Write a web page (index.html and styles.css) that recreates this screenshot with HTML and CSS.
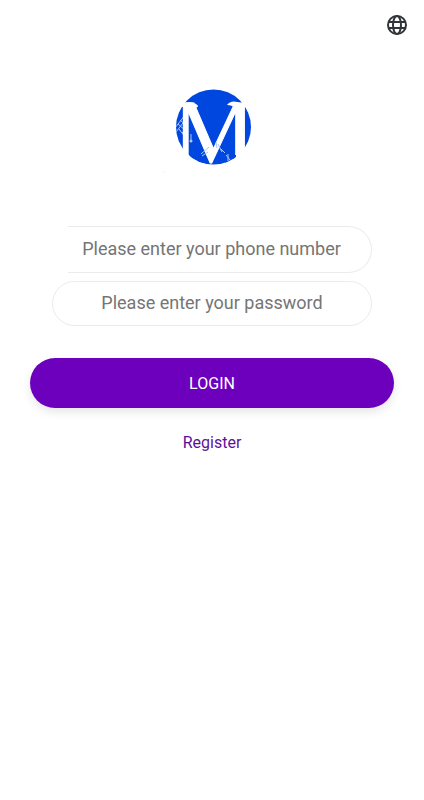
FILE: index.html
```html
<!DOCTYPE html>
<html lang="en">
<head>
  <meta charset="utf-8">
  <meta name="viewport" content="width=device-width, initial-scale=1">
  <title>Login</title>
  <link rel="stylesheet" href="styles.css">
</head>
<body>
  <header class="topbar">
    <button class="language" type="button" aria-label="Language">
      <svg viewBox="0 0 24 24" width="24" height="24" fill="none" stroke="currentColor" stroke-width="2" aria-hidden="true">
        <circle cx="12" cy="12" r="9"/>
        <ellipse cx="12" cy="12" rx="4" ry="9"/>
        <path d="M3.5 9h17M3.5 15h17"/>
      </svg>
    </button>
  </header>
  <main class="login">
    <svg class="logo" viewBox="0 0 100 100" width="100" height="100" role="img" aria-label="M">
      <defs>
        <clipPath id="disc"><circle cx="53.5" cy="47" r="37.5"/></clipPath>
      </defs>
      <circle cx="53.5" cy="47" r="37.5" fill="#0047df"/>
      <g clip-path="url(#disc)" fill="none" stroke="#a9c6f7" stroke-width="1">
        <path d="M15 48l10-13M16 52l10-13M18 44l9 8M20 40l8 7M22 52l6 5M19 49l6 8"/>
      </g>
      <text class="logo-letter" x="54" y="83" text-anchor="middle">M</text>
      <g clip-path="url(#disc)">
        <path d="M30 75h13v12H30zM65 75h11v12H65z" fill="#0047df"/>
        <g fill="none" stroke="#a9c6f7" stroke-width="1">
          <path d="M31 54v8M41 74l8-7M42 76l6-4M56 62l1 6M58 64l4 8M61 69l4 4M66 75l4 5M68 74v7"/>
        </g>
        <circle cx="31" cy="61" r="1.5" fill="#a9c6f7"/>
        <path d="M22 24q8-4 14 0t-6 4z" fill="#fff"/>
        <path d="M67 25q4-6 14-2v5h-6q-3-3-8-3z" fill="#fff"/>
      </g>
      <circle cx="4" cy="92" r="1" fill="#f6f6f4"/>
    </svg>
    <form class="form">
      <div class="fields">
        <input class="field field-phone" type="tel" aria-label="Phone number" placeholder="Please enter your phone number">
        <input class="field" type="password" aria-label="Password" placeholder="Please enter your password">
      </div>
      <button class="submit" type="submit">LOGIN</button>
    </form>
    <a class="register" href="#register">Register</a>
  </main>
</body>
</html>
```
FILE: styles.css
```css
* {
  box-sizing: border-box;
}

body {
  margin: 0;
  background: #fff;
  font-family: Roboto, "Liberation Sans", sans-serif;
}

.topbar {
  display: flex;
  justify-content: flex-end;
  padding: 13px 15px;
}

.language {
  display: flex;
  padding: 0;
  border: 0;
  background: none;
  color: #303338;
}

.login {
  display: flex;
  flex-direction: column;
  align-items: center;
  padding: 30px;
}

.logo {
  margin-right: 4px;
}

.logo-letter {
  font-family: "Liberation Serif", serif;
  font-size: 92px;
  fill: #fff;
  stroke: #fff;
  stroke-width: 1px;
}

.form {
  width: 100%;
  margin-top: 46px;
}

.fields {
  display: flex;
  flex-direction: column;
  gap: 8px;
  padding: 0 22px;
}

.field {
  width: 100%;
  height: 45px;
  padding: 0 24px 2px;
  border: 1px solid #ebebeb;
  border-radius: 24px;
  background: #fff;
  font-family: inherit;
  font-size: 18px;
  text-align: center;
}

.field::placeholder {
  color: #757575;
  opacity: 1;
}

.field-phone {
  width: auto;
  height: 47px;
  margin-left: 16px;
  padding: 0 30px 2px 14px;
  border-left: 0;
  border-radius: 0 24px 24px 0;
}

.submit {
  display: block;
  width: 100%;
  height: 50px;
  margin-top: 32px;
  border: 0;
  border-radius: 25px;
  background: #6c00bd;
  box-shadow: 0 4px 10px rgba(0, 0, 0, 0.1);
  color: #fff;
  font-family: inherit;
  font-size: 16px;
}

.register {
  margin-top: 24px;
  color: #5b1299;
  font-size: 16px;
  line-height: 22px;
  text-decoration: none;
}
```
